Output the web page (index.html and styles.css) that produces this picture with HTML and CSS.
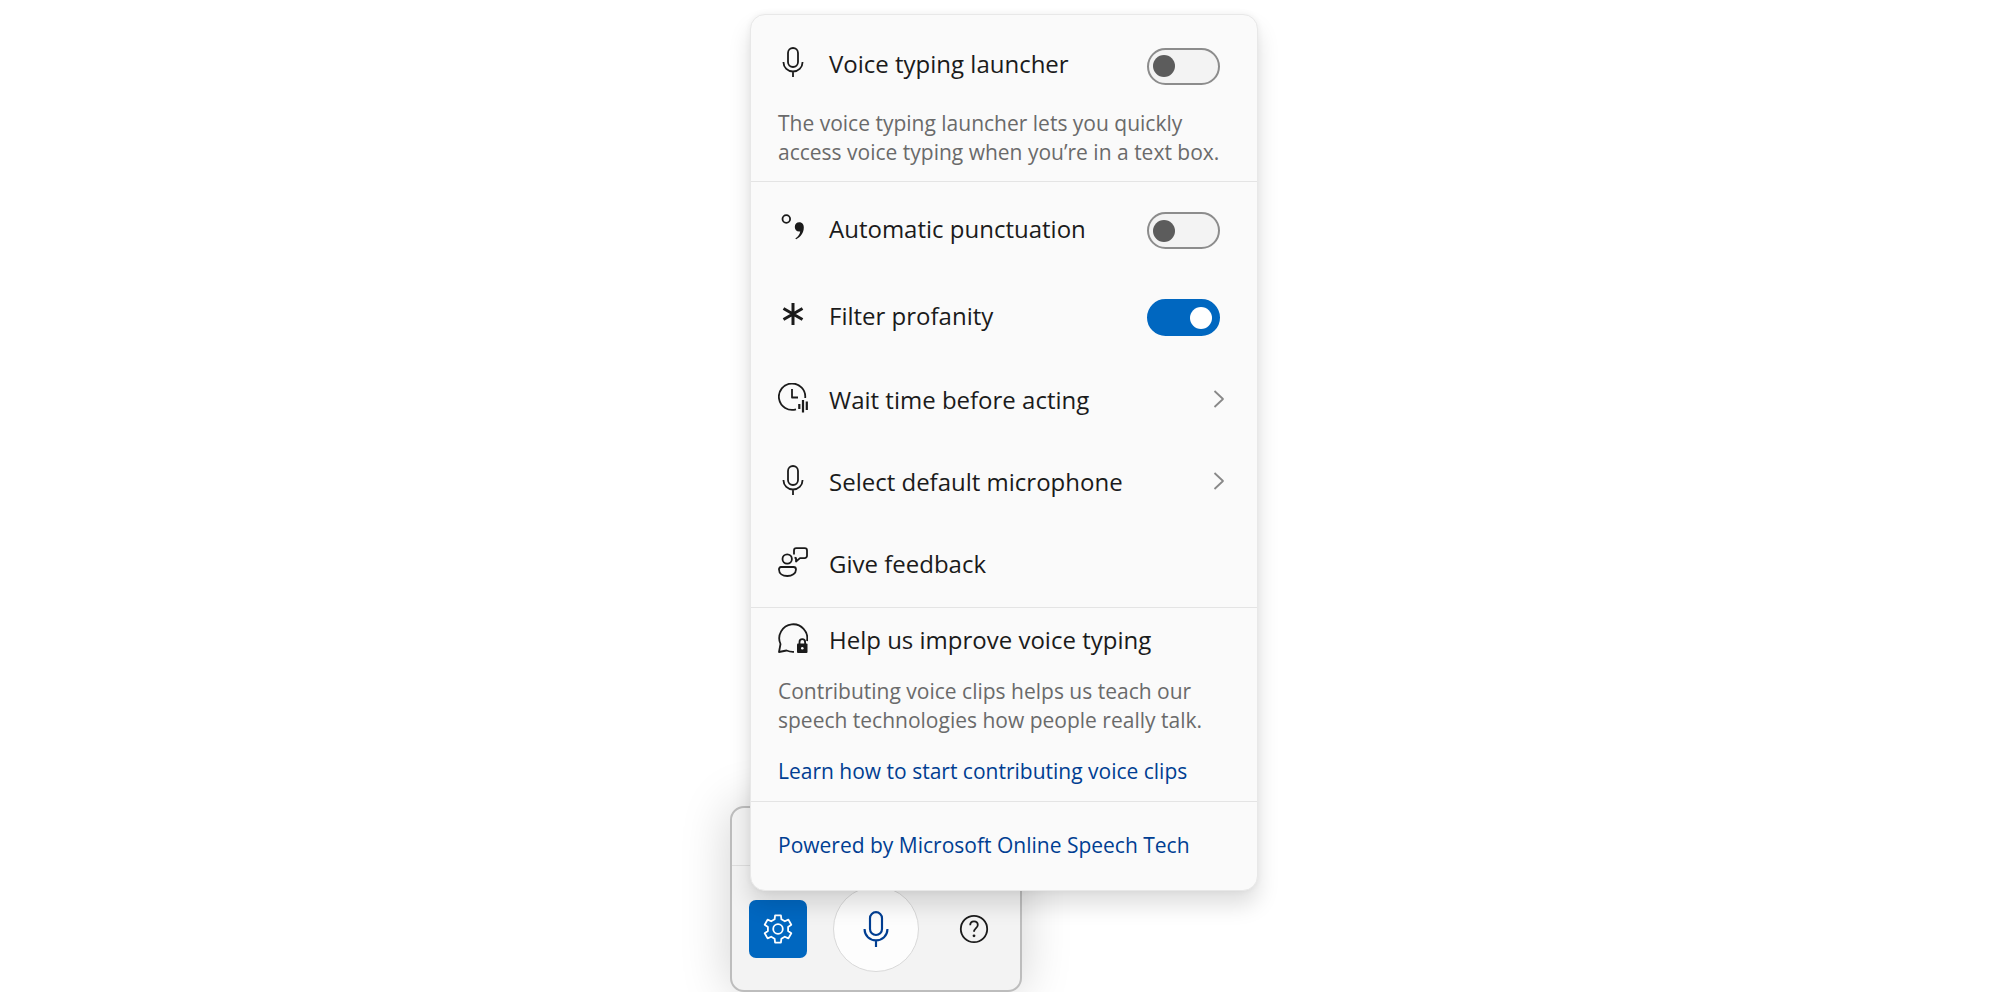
FILE: index.html
```html
<!DOCTYPE html>
<html lang="en">

<head>
  <meta charset="UTF-8">
  <meta name="viewport" content="width=device-width, initial-scale=1.0">
  <title>Voice typing settings</title>
  <link rel="stylesheet" href="styles.css">
</head>

<body>
  <svg class="symbols" aria-hidden="true">
    <symbol id="mic" viewBox="0 0 30 30">
      <rect x="10" y="1" width="10" height="19" rx="5"/>
      <path d="M5.500 15v.5a9.500 9 0 0 0 19 0V15M15 24.500V30"/>
    </symbol>
    <symbol id="chevron" viewBox="0 0 12 18">
      <path d="M1.500 1l8.500 8-8.500 8"/>
    </symbol>
  </svg>

  <main class="voice-typing">
    <div class="menu">
      <section class="section launcher">
        <div class="row">
          <svg class="icon"><use href="#mic"/></svg>
          <label class="label" for="launcher">Voice typing launcher</label>
          <input class="toggle" type="checkbox" role="switch" id="launcher">
        </div>
        <p class="description">The voice typing launcher lets you quickly<br>access voice typing when you’re in a text box.</p>
      </section>

      <section class="section options">
        <div class="row row-toggle">
          <svg class="icon" viewBox="0 0 30 30">
            <circle cx="8.300" cy="7" r="3.800"/>
            <path class="solid" d="M21.300 10.300c2.900 0 4.500 2.200 4.500 5.200 0 5.300-3.200 9.500-7.600 11.800l-.9-.9c2.900-1.900 4.500-4.400 4.900-7-3.200.6-5.400-1.500-5.400-4.500 0-2.700 1.900-4.600 4.500-4.600z"/>
          </svg>
          <label class="label" for="punctuation">Automatic punctuation</label>
          <input class="toggle" type="checkbox" role="switch" id="punctuation">
        </div>
        <div class="row row-toggle">
          <svg class="icon" viewBox="0 0 30 30">
            <path class="heavy" d="M15 4v22M5.500 9.500l19 11M24.500 9.500l-19 11"/>
          </svg>
          <label class="label" for="profanity">Filter profanity</label>
          <input class="toggle" type="checkbox" role="switch" id="profanity" checked>
        </div>
        <button class="row row-button" type="button">
          <svg class="icon" viewBox="0 0 30 30">
            <path d="M27.200 15A13.200 13.200 0 1 0 18 26.300M14 6v8.500h6"/>
            <path class="bars" d="M21.300 21v5M25 17v12.500M28.800 18.500v8.500"/>
          </svg>
          <span class="label">Wait time before acting</span>
          <svg class="chevron"><use href="#chevron"/></svg>
        </button>
        <button class="row row-button" type="button">
          <svg class="icon"><use href="#mic"/></svg>
          <span class="label">Select default microphone</span>
          <svg class="chevron"><use href="#chevron"/></svg>
        </button>
        <button class="row row-button" type="button">
          <svg class="icon" viewBox="0 0 30 30">
            <circle cx="9.200" cy="12" r="4.700"/>
            <path d="M3 20h12.500a2.500 2.500 0 0 1 2.500 2.500c0 4-4 6.500-8.700 6.500S1 26.500 1 22.500A2.200 2.200 0 0 1 3 20z"/>
            <path d="M16 7.500V3.500a2.300 2.300 0 0 1 2.300-2.300h8.400A2.300 2.300 0 0 1 29 3.500v5.300a2.300 2.300 0 0 1-2.300 2.300H22L18 14.500v-3.400l-1.500-.6"/>
          </svg>
          <span class="label">Give feedback</span>
        </button>
      </section>

      <section class="section improve">
        <div class="row">
          <svg class="icon" viewBox="0 0 30 30">
            <path d="M29 18a14 14 0 1 0-26.500 3L1 29l7.500-1.500c2.500 1 5 1.500 7.500 1.300"/>
            <path class="solid" d="M20 20.500h8.500a1 1 0 0 1 1 1V29a1 1 0 0 1-1 1H20a1 1 0 0 1-1-1v-7.500a1 1 0 0 1 1-1z"/>
            <path d="M21.500 21v-2a2.800 2.800 0 0 1 5.600 0v2"/>
            <circle class="keyhole" cx="24.300" cy="25.200" r="1.300"/>
          </svg>
          <h2 class="label">Help us improve voice typing</h2>
        </div>
        <p class="description">Contributing voice clips helps us teach our<br>speech technologies how people really talk.</p>
        <a class="link" href="#">Learn how to start contributing voice clips</a>
      </section>

      <section class="section powered">
        <a class="link" href="#">Powered by Microsoft Online Speech Tech</a>
      </section>
    </div>

    <div class="toolbar">
      <div class="toolbar-header"></div>
      <div class="toolbar-buttons">
        <button class="settings-button" type="button" aria-label="Settings">
          <svg class="icon-tool" viewBox="0 0 30 30">
            <path d="M12.100 1.300h5.800l.5 4 3.400 2 3.600-1.700 2.900 5.100-3.200 2.300v4l3.200 2.300-2.900 5.100-3.600-1.700-3.400 2-.5 4h-5.800l-.5-4-3.400-2-3.600 1.700-2.900-5.100 3.200-2.300v-4l-3.200-2.300 2.900-5.100 3.600 1.700 3.400-2z"/>
            <circle cx="15" cy="15" r="4.800"/>
          </svg>
        </button>
        <button class="mic-button" type="button" aria-label="Start voice typing">
          <svg class="icon-mic"><use href="#mic"/></svg>
        </button>
        <button class="help-button" type="button" aria-label="Help">
          <svg class="icon-tool" viewBox="0 0 30 30">
            <circle cx="15" cy="15" r="13.200"/>
            <path d="M11.200 11.300c0-2.300 1.600-3.900 3.800-3.900s3.800 1.500 3.800 3.600c0 3-3.800 3.300-3.800 6.800"/>
            <circle class="solid" cx="15" cy="21.800" r="1.400"/>
          </svg>
        </button>
      </div>
    </div>
  </main>
</body>

</html>
```
FILE: styles.css
```css
* {
  box-sizing: border-box;
}

body {
  margin: 0;
  background-color: #fff;
  color: #1b1b1b;
  font-family: "Open Sans", "Noto Sans", sans-serif;
  font-size: 24px;
}

button {
  font: inherit;
  color: inherit;
  cursor: pointer;
}

.symbols {
  position: absolute;
  width: 0;
  height: 0;
}

svg {
  flex: none;
  fill: none;
  stroke: currentColor;
  stroke-width: 1.8;
  stroke-linejoin: round;
}

.solid {
  fill: currentColor;
  stroke: none;
}

.heavy {
  stroke-width: 3;
}

.bars {
  stroke-width: 2.2;
}

.keyhole {
  fill: #fafafa;
  stroke: none;
}

.voice-typing {
  width: fit-content;
  margin-left: 36.5%;
  padding-top: 14px;
}

/* settings menu, sits over the toolbar */
.menu {
  position: relative;
  z-index: 1;
  width: 508px;
  margin-left: 20px;
  background-color: #fafafa;
  border: 1px solid #e8e8e8;
  border-radius: 15px;
  box-shadow: 0 14px 22px rgba(0, 0, 0, 0.13), 0 0 6px rgba(0, 0, 0, 0.06);
}

.section + .section {
  border-top: 1px solid #e4e4e4;
}

.row {
  display: flex;
  align-items: center;
  gap: 21px;
  width: 100%;
  padding: 0 37px 0 27px;
}

.row-toggle {
  height: 87px;
}

.row-button {
  height: 82px;
  padding-right: 32px;
  background: none;
  border: 0;
  text-align: left;
}

.icon {
  width: 30px;
  height: 30px;
  margin-bottom: 8px;
}

.label {
  flex: 1;
  margin: 0 0 4px;
  font-size: 24px;
  font-weight: 400;
  line-height: 32px;
  white-space: nowrap;
}

.chevron {
  width: 12px;
  height: 18px;
  margin-bottom: 6px;
  color: #888;
}

.toggle {
  appearance: none;
  display: flex;
  align-items: center;
  flex: none;
  width: 73px;
  height: 37px;
  margin: 0;
  padding: 0 6px 0 4px;
  background-color: #f3f3f3;
  border: 2px solid #8c8c8c;
  border-radius: 19px;
  cursor: pointer;
}

.toggle::before {
  content: "";
  width: 22px;
  height: 22px;
  background-color: #5c5c5c;
  border-radius: 50%;
}

.toggle:checked {
  justify-content: flex-end;
  background-color: #0067c0;
  border-color: #0067c0;
}

.toggle:checked::before {
  background-color: #fff;
}

.description {
  margin: 0;
  padding: 0 0 0 27px;
  color: #6a6a6a;
  font-size: 21px;
  line-height: 29px;
  white-space: nowrap;
}

.link {
  display: block;
  padding-left: 27px;
  color: #003e92;
  font-size: 21px;
  line-height: 29px;
  text-decoration: none;
  white-space: nowrap;
}

.launcher {
  padding: 32px 0 14px;
}

.launcher .description {
  margin-top: 24px;
}

.options {
  padding-top: 5px;
}

.improve {
  padding: 15px 0;
}

.improve .description {
  margin-top: 16px;
}

.improve .link {
  margin-top: 22px;
}

.powered {
  padding: 29px 0 30px;
}

/* voice typing toolbar */
.toolbar {
  width: 292px;
  margin-top: -85px;
  background-color: #f3f3f3;
  border: 2px solid #bdbdbd;
  border-radius: 14px;
  box-shadow: 0 0 50px rgba(0, 0, 0, 0.18);
}

.toolbar-header {
  height: 58px;
  border-bottom: 1px solid #dedede;
}

.toolbar-buttons {
  display: flex;
  align-items: center;
  justify-content: space-between;
  padding: 20px 17px 18px;
}

.settings-button,
.help-button {
  display: grid;
  place-items: center;
  width: 58px;
  height: 58px;
  padding: 0;
  background: none;
  border: 0;
  border-radius: 7px;
}

.settings-button {
  background-color: #0067c0;
  color: #fff;
}

.mic-button {
  display: grid;
  place-items: center;
  width: 86px;
  height: 86px;
  padding: 0;
  background-color: #fdfdfd;
  border: 1px solid #d9d9d9;
  border-radius: 50%;
  color: #003e92;
}

.icon-tool {
  width: 30px;
  height: 30px;
}

.icon-mic {
  width: 36px;
  height: 36px;
}
```
